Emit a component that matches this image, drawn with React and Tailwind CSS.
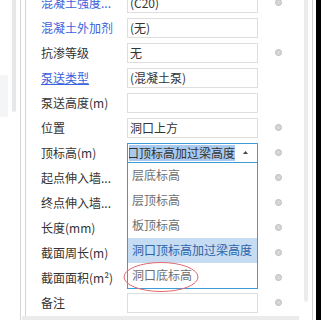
import React from 'react';

const rows = [
  { label: '混凝土强度...', value: '(C20)', link: true, dot: true },
  { label: '混凝土外加剂', value: '(无)', link: true, dot: false },
  { label: '抗渗等级', value: '无', dot: true },
  { label: '泵送类型', value: '(混凝土泵)', link: true, underline: true, dot: false },
  { label: '泵送高度(m)', value: '', dot: false },
  { label: '位置', value: '洞口上方', dot: true },
  { label: '顶标高(m)', select: true, dot: true },
  { label: '起点伸入墙...', value: null, dot: true },
  { label: '终点伸入墙...', value: null, dot: true },
  { label: '长度(mm)', value: null, dot: true },
  { label: '截面周长(m)', value: null, dot: true },
  { label: '截面面积(m²)', value: null, dot: true },
  { label: '备注', value: '', dot: true },
];

const options = ['层底标高', '层顶标高', '板顶标高', '洞口顶标高加过梁高度', '洞口底标高'];

function SelectBox() {
  return (
    <div className="relative w-[131px] h-[20px]">
      <div className="w-full h-full border border-[#3d9bd6] flex items-center overflow-hidden pl-px bg-white">
        <span className="w-[106px] h-[16px] bg-[#a9c9ee] overflow-hidden flex items-center">
          <span className="whitespace-nowrap -ml-[2px] text-[#333] leading-none">口顶标高加过梁高度</span>
        </span>
        <svg className="ml-[8px]" width="5" height="3" viewBox="0 0 5 3">
          <polygon points="2.5,0 5,3 0,3" fill="#444" />
        </svg>
      </div>
      <div className="absolute left-0 top-[20px] w-[131px] border border-t-0 border-[#3d9bd6] bg-white z-10">
        {options.map((o, i) => (
          <div
            key={o}
            className={
              'h-[25px] flex items-center pl-[4px] whitespace-nowrap leading-none ' +
              (i === 3 ? 'bg-[#c5dcf2] text-[#2c62a8]' : 'text-[#6e6e6e]')
            }
          >
            {o}
          </div>
        ))}
        <svg className="absolute left-[-6px] top-[98px] pointer-events-none" width="80" height="34" viewBox="0 0 80 34">
          <ellipse cx="39" cy="16" rx="37" ry="14.5" fill="none" stroke="#e36a6a" strokeWidth="1" />
        </svg>
      </div>
    </div>
  );
}

export default function App() {
  return (
    <div
      className="w-[321px] h-[320px] overflow-hidden bg-white flex text-[12px]"
      style={{ fontFamily: '"Noto Sans CJK SC", "Noto Sans", sans-serif' }}
    >
      {/* left pane */}
      <div className="w-[20px] flex gap-[4px]">
        <div className="w-[8px] h-[42px] mt-[75px] bg-[#f4f5f7]" />
        <div className="w-[4px] h-[112px] bg-[#e7e7e7] rounded-b-full" />
      </div>
      <div className="w-px bg-[#d6d6d6]" />

      <div className="w-[291px] flex flex-col">
        <div className="h-[316px] flex">
          <div className="w-[4px]" />
          <div className="w-px bg-[#d6d6d6]" />
          <div className="w-[278px] overflow-hidden">
            <div className="-mt-[10px]">
              {rows.map((r) => (
                <div key={r.label} className="h-[25px] flex items-center pl-[15px]">
                  <div
                    className={
                      'w-[86px] whitespace-nowrap leading-none ' +
                      (r.link ? 'text-[#3a62dc] ' : 'text-[#333] ') +
                      (r.underline ? 'underline underline-offset-1' : '')
                    }
                  >
                    {r.label}
                  </div>
                  {r.select ? (
                    <SelectBox />
                  ) : (
                    <div className="w-[131px] h-[20px] border border-[#dedede] flex items-center pl-[2px] text-[#333] leading-none whitespace-nowrap">
                      {r.value}
                    </div>
                  )}
                  {r.dot && (
                    <div className="ml-[17px] w-[7px] h-[7px] rounded-full bg-[#d6d6d6] border border-[#bdbdbd]" />
                  )}
                </div>
              ))}
            </div>
          </div>
          <div className="w-[4px] h-[302px] bg-[#ececec] rounded-b-full" />
          <div className="w-[4px]" />
        </div>
        <div className="h-[4px] w-[277px] ml-px bg-[#ebebeb]" />
      </div>

      <div className="w-px bg-[#cfcfcf]" />
      <div className="w-[3px]" />
      <div className="flex-1 bg-black" />
    </div>
  );
}
